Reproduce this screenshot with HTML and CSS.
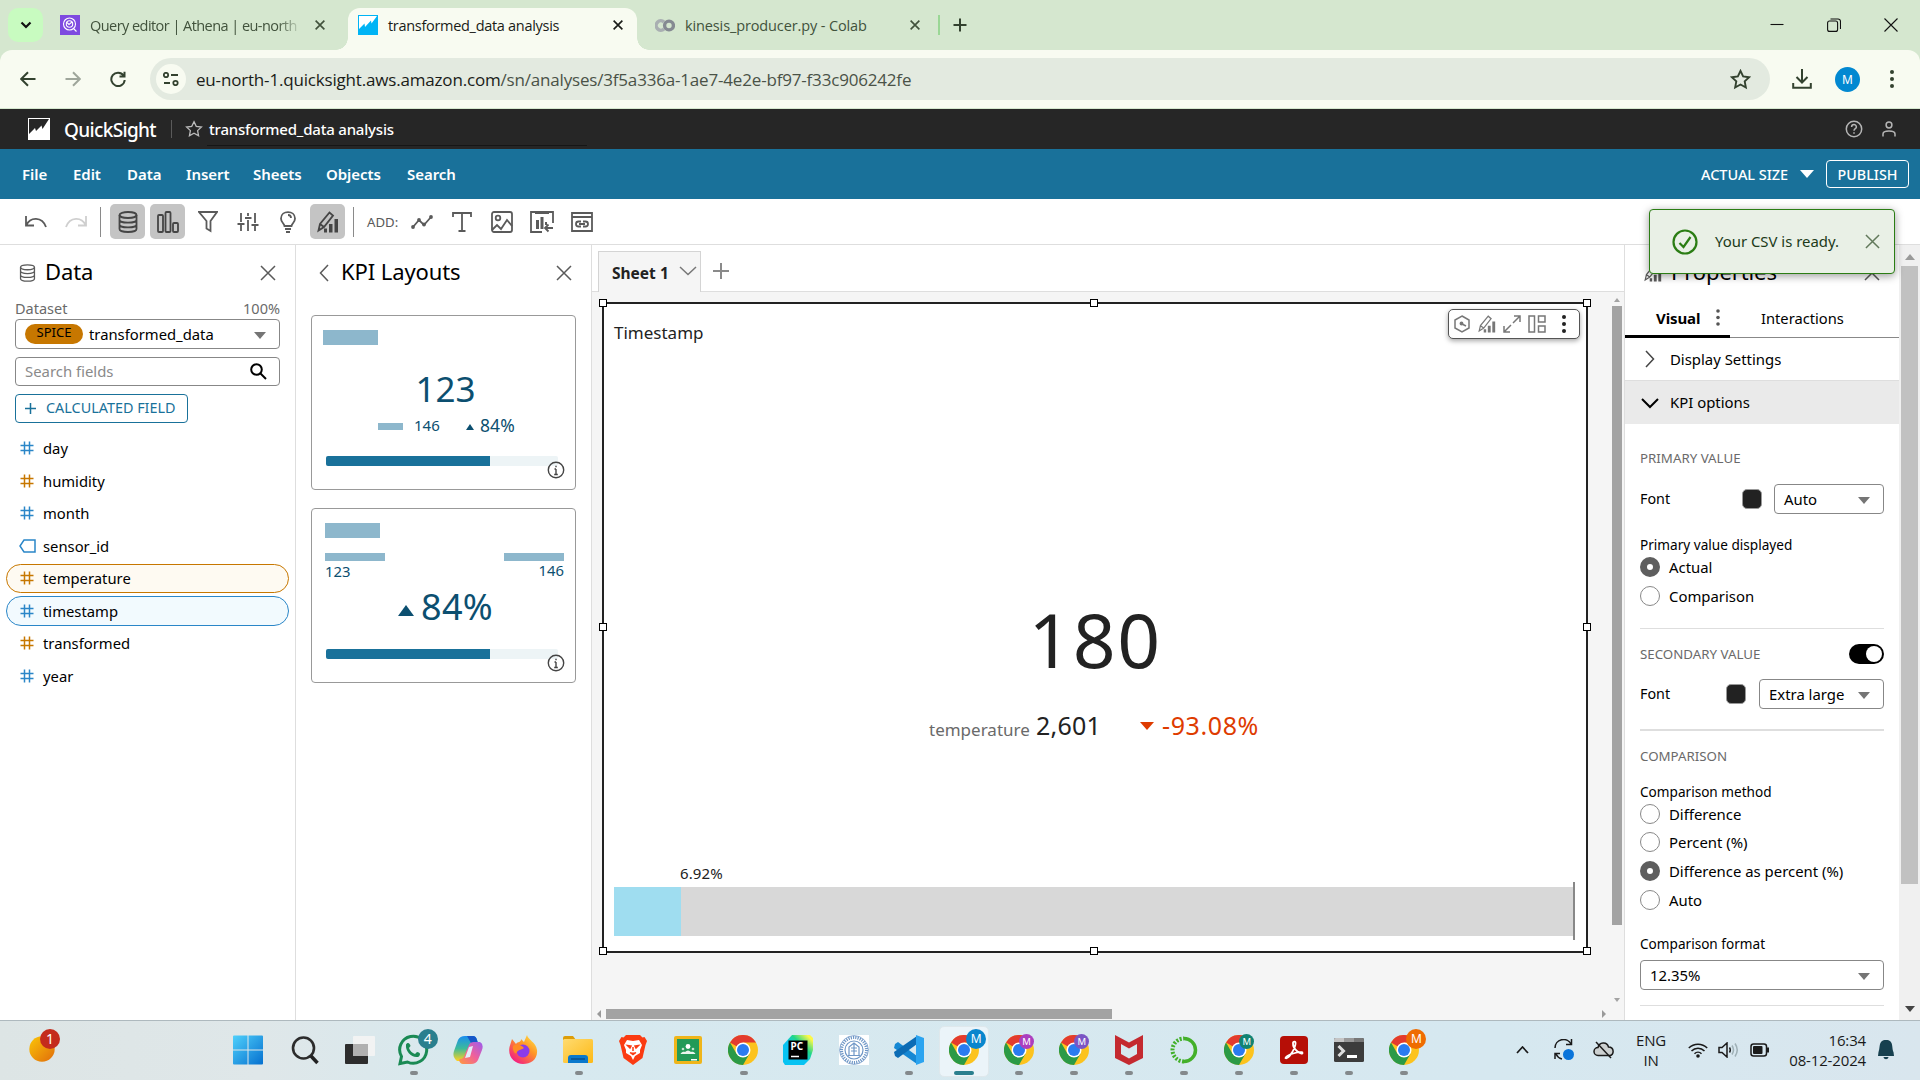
FILE: index.html
```html
<!DOCTYPE html>
<html lang="en">
<head>
<meta charset="utf-8">
<title>transformed_data analysis</title>
<link rel="stylesheet" href="styles.css">
</head>
<body>
<svg class="defs" width="0" height="0">
  <defs>
    <linearGradient id="g-win" x1="0" y1="0" x2="1" y2="1"><stop offset="0" stop-color="#4fd0fb"/><stop offset="1" stop-color="#0670cf"/></linearGradient>
    <linearGradient id="g-sun" x1="0" y1="0" x2="1" y2="1"><stop offset="0" stop-color="#fbc608"/><stop offset="1" stop-color="#e06c0b"/></linearGradient>
    <linearGradient id="g-fold" x1="0" y1="0" x2="1" y2="1"><stop offset="0" stop-color="#ffdb70"/><stop offset="1" stop-color="#fdb916"/></linearGradient>
    <linearGradient id="g-fox" x1="1" y1="0" x2="0.2" y2="1"><stop offset="0" stop-color="#fff04a"/><stop offset=".45" stop-color="#ff9426"/><stop offset="1" stop-color="#f3148b"/></linearGradient>
    <linearGradient id="g-cop1" x1="0" y1="0" x2="0" y2="1"><stop offset="0" stop-color="#1a8ef0"/><stop offset=".5" stop-color="#3dbb9a"/><stop offset="1" stop-color="#ffd21f"/></linearGradient>
    <linearGradient id="g-cop2" x1="1" y1="0" x2="0" y2="1"><stop offset="0" stop-color="#9a5cf0"/><stop offset=".5" stop-color="#f0609a"/><stop offset="1" stop-color="#ff9a3d"/></linearGradient>
    <linearGradient id="g-pc" x1="1" y1="0" x2="0" y2="1"><stop offset=".1" stop-color="#fcf84a"/><stop offset=".35" stop-color="#21d789"/><stop offset=".55" stop-color="#07c3f2"/></linearGradient>
  </defs>
  <symbol id="x" viewBox="0 0 16 16"><path d="M1 1l14 14M15 1L1 15"/></symbol>
  <symbol id="db" viewBox="0 0 20 22"><ellipse cx="10" cy="4" rx="8.500" ry="3"/><path d="M1.500 4v14c0 1.700 3.800 3 8.500 3s8.500-1.300 8.500-3V4M1.500 8.700c0 1.700 3.800 3 8.500 3s8.500-1.300 8.500-3M1.500 13.400c0 1.700 3.800 3 8.500 3s8.500-1.300 8.500-3"/></symbol>
  <symbol id="penbars" viewBox="0 0 22 22"><path d="M1.500 19.500L3 13 12.500 1.500l3.500 3L7 16z M3 13l4 3" fill="none"/><path d="M7 17.500h3v4H7zM12 13h3.500v8.500H12zM17.500 8H21v13.500h-3.500z" fill="currentColor" stroke="none"/></symbol>
  <symbol id="hash" viewBox="0 0 14 14"><path d="M4.500 .5v13M9.500 .5v13M.5 4.500h13M.5 9.500h13"/></symbol>
  <symbol id="info" viewBox="0 0 18 18"><circle cx="9" cy="9" r="7.700"/><path d="M9 8v5.500M7.500 8H9M7.200 13.500h3.600M9 4.700v1.600"/></symbol>
  <symbol id="star" viewBox="0 0 20 20"><path d="M10 1.800l2.500 5.300 5.800.7-4.300 4 1.100 5.800L10 14.800l-5.100 2.800L6 11.800l-4.300-4 5.800-.7z"/></symbol>
  <symbol id="chrome" viewBox="0 0 30 30"><circle cx="15" cy="15" r="15" fill="#fcc31e"/><path d="M15 15L2 7.500A15 15 0 0 1 28 7.500H15z" fill="#e33b2e"/><path d="M2 7.500A15 15 0 0 0 15 30l6.500-11.300L15 15 8.500 18.700z" fill="#2b9a46"/><circle cx="15" cy="15" r="7.500" fill="#fff"/><circle cx="15" cy="15" r="6" fill="#2a7bef"/></symbol>
</svg>

<header class="tabstrip">
  <button class="tab-search"><svg width="12" height="8" viewBox="0 0 12 8"><path d="M1.500 1.500L6 6l4.500-4.500"/></svg></button>
  <div class="tab tab-a">
    <svg width="20" height="20" viewBox="0 0 20 20"><rect width="20" height="20" fill="#7e4ae0"/><g fill="none" stroke="#fff" stroke-width="1.100"><circle cx="9.500" cy="9" r="6"/><circle cx="9.500" cy="9" r="3.200"/><path d="M7 7.500l2 2 3-2.500M13.500 13.500l3 3"/></g></svg>
    <span class="tab-title fade">Query editor | Athena | eu-north</span>
    <svg class="tab-x" width="10" height="10"><use href="#x"/></svg>
  </div>
  <div class="tab tab-b">
    <svg width="20" height="20" viewBox="0 0 20 20"><rect width="20" height="20" fill="#00b4f5"/><path d="M1 1h18l-5.500 7.500-.5-3-6 6.500-.5-3.500L1 14z" fill="#fff"/></svg>
    <span class="tab-title">transformed_data analysis</span>
    <svg class="tab-x" width="10" height="10"><use href="#x"/></svg>
  </div>
  <div class="tab tab-c">
    <svg width="20" height="13" viewBox="0 0 20 13"><g fill="none" stroke-width="3.400"><path d="M9 10a4.700 4.700 0 1 1 0-7" stroke="#a9afb2"/><circle cx="14" cy="6.500" r="4.400" stroke="#858a92"/></g></svg>
    <span class="tab-title">kinesis_producer.py - Colab</span>
    <svg class="tab-x" width="10" height="10"><use href="#x"/></svg>
  </div>
  <i class="tab-sep"></i>
  <svg class="tab-plus" width="14" height="14" viewBox="0 0 14 14"><path d="M7 .5v13M.5 7h13"/></svg>
  <div class="winbtns">
    <svg width="14" height="14" viewBox="0 0 14 14"><path d="M.5 6.500h13"/></svg>
    <svg width="14" height="14" viewBox="0 0 14 14"><rect x=".6" y="3" width="10" height="10.400" rx="2"/><path d="M3.500 1h7.500a2.500 2.500 0 0 1 2.500 2.500V11"/></svg>
    <svg width="14" height="14" viewBox="0 0 14 14"><path d="M.5 .5l13 13M13.500 .5l-13 13"/></svg>
  </div>
</header>

<div class="navwrap"><div class="navbar">
  <svg class="nav-back" width="16" height="16" viewBox="0 0 16 16"><path d="M15.500 8H1.500M8 1.200L1.200 8 8 14.800"/></svg>
  <svg class="nav-fwd" width="16" height="16" viewBox="0 0 16 16"><path d="M.5 8h14M8 1.200L14.800 8 8 14.800"/></svg>
  <svg class="nav-reload" width="16" height="16" viewBox="0 0 16 16"><path d="M13.500 4.500A6.700 6.700 0 1 0 14.700 9M14.500 .7V5.500H9.500"/></svg>
  <div class="urlbar">
    <span class="site"><svg width="16" height="14" viewBox="0 0 16 14"><circle cx="3" cy="3" r="2.200"/><path d="M8 3h7M1 11h6"/><circle cx="12.500" cy="11" r="2.200"/></svg></span>
    <span class="url"><b>eu-north-1.quicksight.aws.amazon.com</b>/sn/analyses/3f5a336a-1ae7-4e2e-bf97-f33c906242fe</span>
    <svg class="bookmark" width="21" height="21"><use href="#star"/></svg>
  </div>
  <svg class="dl" width="20" height="20" viewBox="0 0 20 20"><path d="M10 0v13M4.500 8L10 13.500 15.500 8M1.200 14v4.700h17.600V14"/></svg>
  <span class="avatar">M</span>
  <svg class="kebab" width="4" height="18" viewBox="0 0 4 18"><circle cx="2" cy="2" r="2"/><circle cx="2" cy="9" r="2"/><circle cx="2" cy="16" r="2"/></svg>
</div></div>

<div class="apphead">
  <svg class="qslogo" width="22" height="22" viewBox="0 0 22 22"><rect width="22" height="22" fill="#fff"/><path d="M1 1h20l-6.500 10-1-3.500-5.500 5.500-1-3L1 16z" fill="#262626"/></svg>
  <span class="brand">QuickSight</span>
  <i class="head-sep"></i>
  <svg class="head-star" width="18" height="18"><use href="#star"/></svg>
  <span class="doc-title">transformed_data analysis</span>
  <div class="head-right">
    <svg width="18" height="18" viewBox="0 0 18 18"><circle cx="9" cy="9" r="7.700"/><path d="M6.600 7c0-3.200 4.800-3.200 4.800 0C11.400 8.700 9 8.700 9 10.700M9 12.200v1.500"/></svg>
    <svg width="14" height="16" viewBox="0 0 14 16"><circle cx="7" cy="4" r="2.900"/><path d="M1 15.500V13c0-4 12-4 12 0v2.500"/></svg>
  </div>
</div>

<nav class="menubar">
  <span class="m1">File</span><span class="m2">Edit</span><span class="m3">Data</span><span class="m4">Insert</span><span class="m5">Sheets</span><span class="m6">Objects</span><span class="m7">Search</span>
  <span class="zoom">ACTUAL SIZE</span><i class="caret caret-w"></i>
  <button class="publish">PUBLISH</button>
</nav>

<div class="toolbar">
  <svg class="undo" width="22" height="14" viewBox="0 0 22 14"><path d="M1 1v9.500h8M1.500 10C5 2 17 1 21 12"/></svg>
  <svg class="redo" width="22" height="14" viewBox="0 0 22 14"><path d="M21 1v9.500h-8M20.500 10C17 2 5 1 1 12"/></svg>
  <i class="tsep"></i>
  <span class="tbtn on"><svg width="20" height="22"><use href="#db"/></svg></span>
  <span class="tbtn on"><svg width="22" height="22" viewBox="0 0 22 22"><rect x="1" y="4" width="5" height="17" rx="1"/><rect x="8.500" y="1" width="5" height="20" rx="1"/><rect x="16" y="12" width="5" height="9" rx="1"/></svg></span>
  <span class="tbtn"><svg width="20" height="22" viewBox="0 0 20 22"><path d="M1 1h18l-6.500 9v10l-4-2.500V10z"/></svg></span>
  <span class="tbtn"><svg width="22" height="20" viewBox="0 0 22 20"><path d="M4 1v9M0.500 12h7M4 12v7M11 1v3M8 6h6.500M11 8v11M18 1v10M14.500 13h7M18 13v6"/></svg></span>
  <span class="tbtn"><svg width="16" height="22" viewBox="0 0 16 22"><path d="M4.500 15C4 12 1 11.500 1 7.500 1 -1 15 -1 15 7.500c0 4-3 4.500-3.500 7.500zM5 18h6M6 21h4M8 4c2 0 3 1 3 3"/></svg></span>
  <span class="tbtn on"><svg width="22" height="22"><use href="#penbars"/></svg></span>
  <i class="tsep tsep2"></i>
  <span class="addlbl">ADD:</span>
  <span class="abtn"><svg width="22" height="14" viewBox="0 0 22 14"><path d="M2 12l6-7 5 5 7-8"/><g fill="currentColor" stroke="none"><circle cx="2" cy="12" r="1.900"/><circle cx="8" cy="5" r="1.900"/><circle cx="13" cy="9.500" r="1.900"/><circle cx="20" cy="2" r="1.900"/></g></svg></span>
  <span class="abtn"><svg width="20" height="20" viewBox="0 0 20 20"><path d="M1 5V1h18v4M10 1v18M6.500 19h7"/></svg></span>
  <span class="abtn"><svg width="22" height="22" viewBox="0 0 22 22"><rect x="1" y="1" width="20" height="20" rx="2"/><circle cx="7" cy="7" r="2.300"/><path d="M1 19l5-5 4 4 6-9 5 6"/></svg></span>
  <span class="abtn"><svg width="24" height="22" viewBox="0 0 24 22"><path d="M12 21H1V1h22v11M5 2h14"/><path d="M6 9h3v9H6zM10.500 6h3v12h-3zM15 11h2v3h-2z" fill="currentColor" stroke="none"/><path d="M23 17h-7M18.500 13.500L15 17l3.500 3.500"/></svg></span>
  <span class="abtn"><svg width="22" height="20" viewBox="0 0 22 20"><path d="M1 1h20v18H1zM1 5h20M10 9.500H7.500a2.500 2.500 0 0 0 0 5H10M12 9.500h2.500a2.500 2.500 0 0 1 0 5H12M8 12h6"/></svg></span>
</div>

<main class="work">
  <section class="datapanel">
    <div class="phead"><svg class="phead-db" width="17" height="18"><use href="#db"/></svg><h2 class="h-data">Data</h2><svg class="px" width="16" height="16"><use href="#x"/></svg></div>
    <div class="dsrow"><span>Dataset</span><span>100%</span></div>
    <div class="field select ds"><span class="spice">SPICE</span><span class="dsname">transformed_data</span><i class="caret"></i></div>
    <div class="field search"><span>Search fields</span><svg width="17" height="17" viewBox="0 0 17 17"><circle cx="6.500" cy="6.500" r="5.300"/><path d="M10.500 10.500L16 16"/></svg></div>
    <button class="calc"><svg width="11" height="11" viewBox="0 0 11 11"><path d="M5.500 0v11M0 5.500h11"/></svg>CALCULATED FIELD</button>
    <ul class="fields">
      <li><svg class="blue"><use href="#hash"/></svg>day</li>
      <li><svg class="orange"><use href="#hash"/></svg>humidity</li>
      <li><svg class="blue"><use href="#hash"/></svg>month</li>
      <li><svg class="blue tag" viewBox="0 0 17 14"><path d="M5 1h11v12H5L1 7z"/></svg>sensor_id</li>
      <li class="sel-o"><svg class="orange"><use href="#hash"/></svg>temperature</li>
      <li class="sel-b"><svg class="blue"><use href="#hash"/></svg>timestamp</li>
      <li><svg class="orange"><use href="#hash"/></svg>transformed</li>
      <li><svg class="blue"><use href="#hash"/></svg>year</li>
    </ul>
  </section>

  <section class="kpipanel">
    <div class="phead"><svg class="backchev" width="10" height="18" viewBox="0 0 10 18"><path d="M9 1L1.500 9 9 17"/></svg><h2 class="h-kpi">KPI Layouts</h2><svg class="px" width="16" height="16"><use href="#x"/></svg></div>
    <div class="card">
      <i class="blk c1-title"></i>
      <div class="c1-num">123</div>
      <div class="c1-sub"><i class="blk"></i><span class="s146">146</span><i class="up"></i><span class="s84">84%</span></div>
      <div class="pbar"><i></i></div>
      <svg class="infoi" width="18" height="18"><use href="#info"/></svg>
    </div>
    <div class="card card2">
      <i class="blk c2-title"></i>
      <div class="c2-row"><div><i class="blk"></i><span>123</span></div><div class="r"><i class="blk"></i><span>146</span></div></div>
      <div class="c2-num"><i class="up big"></i><span>84%</span></div>
      <div class="pbar"><i></i></div>
      <svg class="infoi" width="18" height="18"><use href="#info"/></svg>
    </div>
  </section>

  <section class="sheet">
    <div class="sheetbar">
      <div class="sheettab"><b>Sheet 1</b><svg width="18" height="10" viewBox="0 0 18 10"><path d="M1 1l8 7.500L17 1"/></svg></div>
      <svg class="addsheet" width="16" height="16" viewBox="0 0 16 16"><path d="M8 0v16M0 8h16"/></svg>
    </div>
    <div class="canvas">
      <div class="stage">
        <div class="visual">
          <div class="vtitle">Timestamp</div>
          <div class="kpi">180</div>
          <div class="kpisub"><span class="k-l">temperature</span><span class="k-v">2,601</span><i class="down"></i><span class="k-d">-93.08%</span></div>
          <div class="barlabel">6.92%</div>
          <div class="barwrap"><div class="bar"><i style="width:6.98%"></i></div></div>
          <div class="vtools">
            <svg width="18" height="18" viewBox="0 0 18 18"><path d="M9 1l7 4v8l-7 4-7-4V5zM9 9l4 2"/><circle cx="8.500" cy="8.500" r="1.200" fill="currentColor"/></svg>
            <svg width="18" height="18"><use href="#penbars"/></svg>
            <svg width="18" height="18" viewBox="0 0 18 18"><path d="M10 8l7-7M11 1h6v6M8 10l-7 7M1 11v6h6"/></svg>
            <svg width="18" height="18" viewBox="0 0 18 18"><path d="M1 1h5.500v16H1zM10.500 1H17v6h-6.500zM10.500 11H17v6h-6.500z"/></svg>
            <svg class="dots" width="4" height="18" viewBox="0 0 4 18"><circle cx="2" cy="2" r="2"/><circle cx="2" cy="9" r="2"/><circle cx="2" cy="16" r="2"/></svg>
          </div>
          <i class="h tl"></i><i class="h tc"></i><i class="h tr"></i><i class="h ml"></i><i class="h mr"></i><i class="h bl"></i><i class="h bc"></i><i class="h br"></i>
        </div>
        <div class="vscroll"><i class="a up"></i><i class="thumb"></i><i class="a dn"></i></div>
      </div>
      <div class="hscroll"><i class="a lt"></i><i class="thumb"></i><i class="a rt"></i></div>
    </div>
  </section>

  <section class="props">
    <div class="phead"><svg class="pp-ic" width="18" height="18"><use href="#penbars"/></svg><h2 class="h-prop">Properties</h2><svg class="px" width="16" height="16"><use href="#x"/></svg></div>
    <div class="ptabs"><div class="pt on"><b>Visual</b><svg width="4" height="17" viewBox="0 0 4 17"><circle cx="2" cy="2" r="1.800"/><circle cx="2" cy="8.500" r="1.800"/><circle cx="2" cy="15" r="1.800"/></svg></div><div class="pt2">Interactions</div></div>
    <div class="acc"><svg width="18" height="18" viewBox="0 0 18 18"><path d="M5 1l7.500 8L5 17"/></svg>Display Settings</div>
    <div class="acc open"><svg width="18" height="18" viewBox="0 0 18 18"><path d="M1 5l8 8 8-8"/></svg><span>KPI options</span></div>
    <div class="pbody">
      <div class="sec s1">PRIMARY VALUE</div>
      <div class="frow"><span>Font</span><i class="sw"></i><div class="select w1">Auto<i class="caret"></i></div></div>
      <div class="lab l1">Primary value displayed</div>
      <div class="radios r1">
        <div class="radio on"><i></i>Actual</div>
        <div class="radio"><i></i>Comparison</div>
      </div>
      <div class="secrow"><span class="sec">SECONDARY VALUE</span><span class="toggle"><i></i></span></div>
      <div class="frow f2"><span>Font</span><i class="sw"></i><div class="select w2">Extra large<i class="caret"></i></div></div>
      <div class="sec s3">COMPARISON</div>
      <div class="lab l2">Comparison method</div>
      <div class="radios r2">
        <div class="radio"><i></i>Difference</div>
        <div class="radio"><i></i>Percent (%)</div>
        <div class="radio on"><i></i>Difference as percent (%)</div>
        <div class="radio"><i></i>Auto</div>
      </div>
      <div class="lab l3">Comparison format</div>
      <div class="select w3">12.35%<i class="caret"></i></div>
      <div class="endline"></div>
    </div>
  </section>
  <div class="pscroll"><i class="a up"></i><i class="thumb"></i><i class="a dn"></i></div>
</main>

<div class="toast"><svg width="26" height="26" viewBox="0 0 26 26"><circle cx="13" cy="13" r="11.500"/><path d="M7.500 14l4 4 7-10"/></svg><span>Your CSV is ready.</span><svg class="tx" width="15" height="15"><use href="#x"/></svg></div>

<footer class="taskbar">
  <div class="widget"><svg width="26" height="26" viewBox="0 0 26 26"><circle cx="13" cy="13" r="12.700" fill="url(#g-sun)"/></svg><span class="badge">1</span></div>
  <div class="apps">
    <div class="app"><svg width="30" height="30" viewBox="0 0 30 30"><path d="M0 1.500Q0 .5 1 .5h13.500v14H0zM15.500 .5H29q1 0 1 1v13H15.500zM0 15.500h14.500v14H1q-1 0-1-1zM15.500 15.500H30v13q0 1-1 1H15.500z" fill="url(#g-win)"/></svg></div>
    <div class="app nudge"><svg width="30" height="30" viewBox="0 0 30 30"><circle cx="13.500" cy="13" r="10.500" fill="none" stroke="#2c2c2c" stroke-width="2.600"/><path d="M21 21l6.500 7" stroke="#222" stroke-width="3.500"/></svg></div>
    <div class="app nudge"><svg width="30" height="30" viewBox="0 0 30 30"><rect x="0" y="9" width="23" height="20" rx="1" fill="#2d2d2d"/><rect x="8" y="1" width="22" height="20" rx="1" fill="#f4f4f4" opacity=".9"/><rect x="8" y="9" width="15" height="12" fill="#b0b0b0"/></svg></div>
    <div class="app run"><svg width="32" height="32" viewBox="0 0 32 32"><path d="M3 29.500l1.500-7A13.500 13.500 0 1 1 10.500 28z" fill="none" stroke="#1a8a54" stroke-width="3"/><path d="M9 10.500c2-3 4-1 4.500 1.500L12 14c1 3 3 5 6 6l2-2c3 .5 4 2 2 4.500C16 25 8 18 9 10.500z" fill="#1a8a54"/></svg><span class="badge teal">4</span></div>
    <div class="app"><svg width="30" height="30" viewBox="0 0 30 30"><path d="M12 1h8q3 0 4 4l1 3h-7l-4 14q-2 4-6 4H4Q-1 22 1 16L5 5q2-4 7-4z" fill="url(#g-cop1)"/><path d="M14 1h6q3 0 4 4l1 3h-7z" fill="#1557c8"/><path d="M18 29h-8q-3 0-4-4l1-1q4 0 5-5l4-9q1-3 5-3h6q4 2 2 8l-4 10q-2 4-7 4z" fill="url(#g-cop2)"/><path d="M16 12l-4 11 5-1 3-11z" fill="#e3effa"/></svg></div>
    <div class="app"><svg width="30" height="30" viewBox="0 0 30 30"><path d="M19 0c1 5 9 7 10 15 1 9-6 14-14 14S-.5 22 1.500 12L4 4l4 5c2-3 5-1 5-5l3 3z" fill="url(#g-fox)"/><circle cx="15" cy="16" r="6.500" fill="#8a3bea"/><path d="M5 11c4-3 8-1 11 2-2 2-5 1-7 4-1 4-5-1-4-6z" fill="#ff8b25"/></svg></div>
    <div class="app run"><svg width="30" height="30" viewBox="0 0 30 30"><path d="M0 3q0-2 2-2h8l3 4H0z" fill="#dd9d08"/><rect y="4" width="30" height="24" rx="1.500" fill="url(#g-fold)"/><path d="M5 28v-5q0-3 3-3h14q3 0 3 3v5z" fill="#0a78cc"/><path d="M8 24h14" stroke="#0a4f8c" stroke-width="1.500"/></svg></div>
    <div class="app"><svg width="28" height="30" viewBox="0 0 28 30"><path d="M7 0h14l2.500 2.500 2-.5L28 6l-1.500 4-3 13L14 30 4.500 23 1.500 10 0 6l2.500-4 2 .5z" fill="#fb3b12"/><path d="M8 5l6 1 6-1 3 5-2 5 0 3-5 3-2 4-2-4-5-3 0-3-2-5z" fill="#fff"/><path d="M8.500 10.500l3.500.5-1 2zM19.500 10.500l-3.500.5 1 2zM14 12v4M11 17.500l3 2 3-2" fill="#fb3b12" stroke="#fb3b12"/></svg></div>
    <div class="app"><svg width="28" height="30" viewBox="0 -2 28 30"><rect y="-1" width="28" height="28" rx="2" fill="#efb51a"/><rect x="3" y="2" width="22" height="22" fill="#229a57"/><circle cx="14" cy="9.500" r="2.400" fill="#fff"/><circle cx="9" cy="12" r="1.300" fill="#bfe3cd"/><circle cx="19" cy="12" r="1.300" fill="#bfe3cd"/><path d="M6.500 17c1-2.500 4-2.500 4.500-2 2-2 4-2 6 0 .5-.5 3.500-.5 4.500 2z" fill="#e8f5ec"/><path d="M17 22h6v1.500h-6z" fill="#fff"/></svg></div>
    <div class="app run"><svg width="30" height="30"><use href="#chrome"/></svg></div>
    <div class="app"><svg width="30" height="30" viewBox="0 0 30 30"><path d="M9 0h18l3 3v12l-3 9-6 6H2l-2-3V10z" fill="url(#g-pc)"/><rect x="5.500" y="5.500" width="19" height="19" fill="#000"/><path d="M8 21.500h8" stroke="#fff" stroke-width="1.500"/><text x="7.500" y="15" fill="#fff" font-family="Noto Sans,sans-serif" font-size="10" font-weight="700" letter-spacing="0">PC</text></svg></div>
    <div class="app"><svg width="30" height="30" viewBox="0 0 30 30"><rect width="30" height="30" fill="#fff"/><g fill="none" stroke="#6f97c6"><circle cx="15" cy="15" r="12.500" stroke-width="3" stroke-dasharray="1.200 1.100"/><circle cx="15" cy="15" r="14.400" stroke-width=".8"/><circle cx="15" cy="15" r="9" stroke-width="1.200"/><path d="M10 20V12l5-4 5 4v8M12 13h6M12 16h6M15 9v11M9 20.500h12" stroke-width="1.200"/></g></svg></div>
    <div class="app run"><svg width="30" height="30" viewBox="0 0 30 30"><path d="M1 9l3-2 19 14v8L0 13z" fill="#1588d4"/><path d="M1 21l3 2L23 9V1L0 17z" fill="#0b6cb5"/><path d="M22 0l8 3v24l-8 3z" fill="#2ba4f0"/></svg></div>
    <div class="app active"><svg width="30" height="30"><use href="#chrome"/></svg><span class="badge b-blue">M</span></div>
    <div class="app run"><svg width="30" height="30"><use href="#chrome"/></svg><span class="mini m-mag">M</span></div>
    <div class="app run"><svg width="30" height="30"><use href="#chrome"/></svg><span class="mini m-pur">M</span></div>
    <div class="app run"><svg width="28" height="30" viewBox="0 0 28 30"><path d="M0 0l14 7.500L28 0v23l-14 7-14-7zM6 9v10l8 4.500 8-4.500V9l-8 4.500z" fill="#c42a30" fill-rule="evenodd"/></svg></div>
    <div class="app run"><svg width="28" height="28" viewBox="0 0 28 28"><path d="M14 2.500a11.500 11.500 0 0 1 0 23" fill="none" stroke="#43b02a" stroke-width="3.500"/><path d="M14 25.500a11.500 11.500 0 0 1 0-23" fill="none" stroke="#43b02a" stroke-width="4" stroke-dasharray="2 1.500"/></svg></div>
    <div class="app run"><svg width="30" height="30"><use href="#chrome"/></svg><span class="mini m-teal">M</span></div>
    <div class="app run"><svg width="28" height="28" viewBox="0 0 28 28"><rect width="28" height="28" rx="4" fill="#b60e06"/><path d="M5.500 22c0-3 17-8 17-5 0 2.500-10-3-9.500-10 0-2 3-2 2.500 1C15 13 8 24 5.500 22z" fill="none" stroke="#fff" stroke-width="1.800"/></svg></div>
    <div class="app run"><svg width="30" height="24" viewBox="0 0 30 24"><rect width="30" height="24" rx="1.500" fill="#3c3c3c"/><path d="M0 1.500Q0 0 1.500 0H10v4H0z" fill="#c5c5c5"/><path d="M10 0h10v4H10z" fill="#999"/><path d="M20 0h8.500Q30 0 30 1.500V4H20z" fill="#777"/><path d="M4.500 8l5 5-5 5" fill="none" stroke="#ddd" stroke-width="3"/><path d="M13 18.500h10" stroke="#fff" stroke-width="3"/></svg></div>
    <div class="app run"><svg width="30" height="30"><use href="#chrome"/></svg><span class="badge b-or">M</span></div>
  </div>
  <div class="tray">
    <svg class="ty1" width="13" height="8" viewBox="0 0 13 8"><path d="M1 7l5.500-6L12 7" stroke-width="1.700"/></svg>
    <svg class="ty2" width="22" height="22" viewBox="0 0 22 22"><path d="M2 9A8.500 8.500 0 0 1 18 5M18.500 0v5.500H13M9 20a9 9 0 0 1-6-5M2 20v-5.500h5"/><circle cx="15.500" cy="15.500" r="5.500" fill="#0a74da" stroke="none"/></svg>
    <svg class="ty3" width="22" height="18" viewBox="0 0 22 18"><path d="M5 14.500a4 4 0 0 1 0-8C6 1 14 0 15.500 6c6 0 6 8.500 1 8.500z" fill="#ccd0d0"/><path d="M3 1l15 16"/></svg>
    <div class="lang"><span>ENG</span><span>IN</span></div>
    <svg class="ty4" width="20" height="16" viewBox="0 0 20 16"><path d="M.8 6a13 13 0 0 1 18.400 0M3.500 9a9 9 0 0 1 13 0M6.500 11.700a5 5 0 0 1 7 0"/><circle cx="10" cy="14" r="1.800" fill="#1a1a1a" stroke="none"/></svg>
    <svg class="ty5" width="21" height="16" viewBox="0 0 21 16"><path d="M1 5.500h3L9 1v14l-5-4.500H1zM11.500 5.500q1.500 2.500 0 5"/><path d="M14 3.500q3 4.500 0 9M17 1.500q4.500 6.500 0 13" stroke="#9fb0b6"/></svg>
    <svg class="ty6" width="20" height="14" viewBox="0 0 20 14"><rect x="1" y="1" width="15.500" height="12" rx="2.500"/><rect x="3" y="3" width="9.500" height="8" rx="1" fill="#1a1a1a" stroke="none"/><path d="M18 4.500v5" stroke-width="2"/></svg>
    <div class="clock"><span>16:34</span><span>08-12-2024</span></div>
    <svg class="ty7" width="16" height="20" viewBox="0 0 16 20"><path d="M8 0c8 0 5.500 8 7.500 12l.5 4H0l.500-4C2.500 8 0 0 8 0zM5.500 17h5c-.5 3-4.500 3-5 0z" fill="#17404f" stroke="none"/></svg>
  </div>
</footer>
</body>
</html>
```
FILE: styles.css
```css
* { box-sizing: border-box; }
body { margin: 0; width: 1920px; height: 1080px; overflow: hidden; position: relative; font-family: "Noto Sans", "Open Sans", sans-serif; font-size: 15px; color: #000; background: #fff; }
svg { display: block; flex: none; fill: none; stroke: currentColor; stroke-width: 1.5; }
i { display: block; flex: none; }
button { margin: 0; padding: 0; border: 0; background: none; font: inherit; }
h2 { margin: -3px 0 0; font-size: 22px; font-weight: 400; line-height: 30px; letter-spacing: -.1px; }
.defs { position: absolute; }

/* browser chrome */
.tabstrip { height: 50px; background: #d5e7cf; display: flex; align-items: center; font-family: "Open Sans", "Noto Sans", sans-serif; font-size: 14.5px; letter-spacing: -.3px; }
.tab-search { width: 35px; height: 34px; margin: 0 5px 0 8px; border-radius: 10px; background: #c8fbc0; display: flex; align-items: center; justify-content: center; color: #111; }
.tab-search svg { stroke-width: 2.2; }
.tab { display: flex; align-items: center; white-space: nowrap; color: #41523c; }
.tab svg:first-child { stroke: none; margin-right: 10px; }
.tab-title { flex: none; }
.tab-x { stroke-width: 2.6; }
.tab-a { width: 300px; padding-left: 12px; }
.tab-a .tab-title { width: 213px; margin-right: 12px; letter-spacing: -.55px; }
.fade { -webkit-mask-image: linear-gradient(90deg, #000 88%, rgba(0,0,0,.15) 98%); mask-image: linear-gradient(90deg, #000 88%, rgba(0,0,0,.15) 98%); }
.tab-b { align-self: flex-end; height: 42px; width: 289px; padding: 0 0 8px 10px; background: #f8fbf1; border-radius: 12px 12px 0 0; color: #1a1c18; position: relative; }
.tab-b::before, .tab-b::after { content: ""; position: absolute; bottom: 0; width: 12px; height: 12px; }
.tab-b::before { left: -12px; background: radial-gradient(circle at 0 0, transparent 11.5px, #f8fbf1 12px); }
.tab-b::after { right: -12px; background: radial-gradient(circle at 100% 0, transparent 11.5px, #f8fbf1 12px); }
.tab-b .tab-title { width: 225px; }
.tab-c { width: 283px; padding-left: 18px; }
.tab-c .tab-title { width: 225px; letter-spacing: -.12px; }
.tab-sep { width: 2px; height: 20px; margin-left: 18px; background: #9ad795; }
.tab-plus { margin-left: 13px; stroke-width: 2; color: #33412f; }
.winbtns { margin-left: auto; margin-right: 22px; display: flex; gap: 43px; color: #111; }
.winbtns svg { stroke-width: 1.1; }
.navwrap { background: #d5e7cf; height: 59px; }
.navbar { height: 58px; background: #f8fbf1; border-radius: 12px 12px 0 0; display: flex; align-items: center; color: #33422f; }
.navbar > svg { stroke-width: 2; }
.nav-back { margin-left: 20px; }
.nav-fwd { margin-left: 29px; color: #9fa69b; }
.nav-reload { margin-left: 29px; }
.urlbar { margin-left: 24px; width: 1620px; height: 42px; border-radius: 21px; background: #e3eae0; display: flex; align-items: center; }
.site { margin-left: 6px; width: 30px; height: 30px; border-radius: 50%; background: #f8fbf1; display: flex; align-items: center; justify-content: center; }
.site svg { stroke-width: 1.8; }
.url { margin-left: 10px; font-family: "Open Sans", "Noto Sans", sans-serif; font-size: 17px; letter-spacing: -.18px; color: #4a5247; white-space: nowrap; }
.url b { font-weight: 400; color: #1a1c18; }
.bookmark { margin-left: auto; margin-right: 19px; stroke-width: 1.8; }
.dl { margin-left: 22px; }
.avatar { margin-left: 23px; width: 25px; height: 25px; border-radius: 50%; background: #0288d1; color: #fff; font-size: 12px; line-height: 25px; text-align: center; }
.kebab { margin-left: 30px; fill: currentColor; stroke: none; }

/* application header */
.apphead { height: 40px; background: #262626; color: #fff; display: flex; align-items: center; }
.qslogo { margin-left: 28px; stroke: none; }
.brand { margin-left: 14px; width: 92px; padding-top: 2px; font-size: 19px; font-weight: 500; letter-spacing: -.65px; }
.head-sep { width: 1px; height: 18px; margin-left: 15px; background: #5a5a5a; }
.head-star { margin-left: 13px; color: #bbb; stroke-width: 1.4; }
.doc-title { margin-left: 4px; width: 380px; height: 33px; padding: 6px 0 0 2px; line-height: 20px; border-bottom: 1px solid #161616; font-size: 15px; font-weight: 500; letter-spacing: -.2px; }
.head-right { margin-left: auto; margin-right: 24px; display: flex; align-items: center; gap: 19px; color: #b5b5b5; }
.menubar { height: 50px; background: #19719a; color: #fff; display: flex; align-items: center; font-size: 15px; font-weight: 600; padding-left: 22px; letter-spacing: -.05px; }
.m1 { width: 51px; } .m2 { width: 54px; } .m3 { width: 59px; } .m4 { width: 67px; } .m5 { width: 73px; } .m6 { width: 81px; } .m7 { width: 80px; }
.zoom { margin-left: auto; width: 99px; white-space: nowrap; font-size: 14.5px; font-weight: 500; }
.caret { border: 6.500px solid transparent; border-top: 7px solid #757575; border-bottom: 0; position: relative; }
.caret-w { border-width: 8px 7px 0; border-top-color: #fff; }
.publish { margin: 0 11px 0 12px; width: 83px; height: 28px; border: 1px solid #fff; border-radius: 4px; color: #fff; font-size: 14.3px; font-weight: 500; line-height: 25px; }

.toolbar { height: 46px; border-bottom: 1px solid #dedede; display: flex; align-items: center; color: #5a5a5a; }
.toolbar svg { stroke-width: 1.8; }
.undo { margin-left: 25px; }
.redo { margin-left: 18px; color: #cfcfcf; }
.tsep { width: 1px; height: 30px; margin: 0 9px 0 13px; background: #8a8a8a; }
.tbtn { flex: none; width: 35px; height: 35px; margin-right: 5px; border-radius: 5px; display: flex; align-items: center; justify-content: center; }
.on.tbtn { background: #c4c4c4; color: #454545; }
.tsep2 { margin: 0 13px 0 3px; }
.addlbl { width: 35px; font-size: 13.2px; }
.abtn { width: 40px; display: flex; justify-content: center; }

/* workspace */
.work { height: 775px; display: flex; }
.phead { height: 55px; display: flex; align-items: center; color: #5a5a5a; }
.phead h2 { color: #000; }
.px { stroke-width: 1.5; margin-left: auto; }
.datapanel { width: 296px; border-right: 1px solid #dedede; }
.datapanel .phead { padding: 0 19px; }
.h-data { margin-left: 9px; }
.phead-db { stroke-width: 1.6; }
.dsrow { display: flex; justify-content: space-between; margin: 0 15px; height: 19px; line-height: 17px; font-size: 14.5px; color: #6a6a6a; }
.field, .select { border: 1px solid #878787; border-radius: 4px; display: flex; align-items: center; white-space: nowrap; }
.field { margin: 0 15px; height: 29px; }
.spice { margin-left: 9px; width: 58px; height: 20px; border-radius: 10px; background: #c77700; font-size: 13px; line-height: 16px; text-align: center; }
.dsname { margin-left: 6px; font-size: 14.8px; line-height: 20px; padding-bottom: 1px; }
.select .caret { margin: 2px 13px 0 auto; }
.search { margin-top: 8px; color: #8a8a8a; font-size: 14.9px; line-height: 20px; padding: 0 12px 1px 9px; justify-content: space-between; }
.search svg { color: #000; stroke-width: 2; }
.calc { margin: 8px 15px 0; width: 173px; height: 29px; border: 1px solid #19719a; border-radius: 4px; color: #19719a; font-size: 14.4px; line-height: 20px; display: flex; align-items: center; padding: 0 0 1px 9px; white-space: nowrap; }
.calc svg { margin-right: 10px; }
.fields { list-style: none; margin: 10.500px 0 0; padding: 0; }
.fields li { height: 29.500px; margin: 0 6px 3px; border: 1px solid transparent; border-radius: 15px; display: flex; align-items: center; padding-left: 13px; font-size: 14.8px; }
.fields svg { width: 14px; height: 14px; margin-right: 9px; }
.fields svg.tag { width: 17px; height: 14px; margin: 0 7px 0 -1px; }
.blue { color: #2a86c8; }
.orange { color: #c77700; }
.fields .sel-o { background: #fefaf2; border-color: #c77700; }
.fields .sel-b { background: #f2fafe; border-color: #2a86c8; }

.kpipanel { width: 296px; border-right: 1px solid #dedede; }
.kpipanel .phead { padding: 0 19px 0 23px; height: 55px; margin-bottom: 15px; }
.h-kpi { margin-left: 12px; }
.card { margin: 0 15px 18px; height: 175px; border: 1px solid #999; border-radius: 4px; position: relative; color: #0c4f70; overflow: hidden; }
.blk { background: #8db7cc; }
.c1-title { width: 55px; height: 15px; margin: 14px 0 0 11px; }
.c1-num { margin: 26px 0 0 4px; height: 48px; line-height: 35px; font-size: 35px; text-align: center; }
.c1-sub { height: 22px; padding-left: 66px; display: flex; align-items: center; margin-top: -5px; line-height: 22px; }
.c1-sub .blk { width: 25px; height: 7px; margin-top: 3px; }
.s146 { margin-left: 11px; width: 52px; font-size: 15px; }
.up { border: 4.500px solid transparent; border-bottom: 6px solid #0c4f70; border-top: 0; }
.c1-sub .up { margin: 4px 6px 0 0; }
.s84 { font-size: 17.5px; letter-spacing: .1px; }
.pbar { position: absolute; left: 14px; top: 140px; width: 232px; height: 10px; border-radius: 2px; background: #edf4f6; overflow: hidden; }
.pbar i { width: 164px; height: 10px; background: #19719a; }
.infoi { position: absolute; right: 10px; bottom: 10px; color: #444; stroke-width: 1.4; }
.c2-title { width: 55px; height: 15px; margin: 14px 0 0 13px; }
.c2-row { margin: 15px 11px 0 13px; display: flex; justify-content: space-between; font-size: 14.8px; line-height: 20px; }
.c2-row .blk { width: 60px; height: 8px; }
.c2-row span { display: block; }
.c2-row .r { text-align: right; }
.c2-row .r span { margin-top: -1px; }
.c2-num { display: flex; align-items: center; height: 40px; margin-top: 5px; padding-left: 86px; font-size: 36px; letter-spacing: .3px; }
.big { border-width: 0 8px 11px; margin: 9px 7px 0 0; }

.sheet { width: 1033px; border-right: 1px solid #dedede; }
.sheetbar { height: 47px; border-bottom: 1px solid #dedede; display: flex; padding: 6px 0 0 6px; }
.sheettab { width: 103px; height: 41px; border: 1px solid #d4d4d4; border-bottom: 0; background: #f5f5f5; display: flex; align-items: center; padding: 2px 3px 0 13px; color: #222; font-size: 15.5px; justify-content: space-between; }
.sheettab svg { color: #777; margin-bottom: 4px; }
.sheettab b { font-weight: 700; }
.addsheet { margin: 12px 0 0 12px; color: #8a8a8a; stroke-width: 2; }
.canvas { height: 728px; background: #f5f5f5; }
.stage { height: 716px; display: flex; justify-content: space-between; padding: 10px 2px 0 10px; }
.visual { position: relative; width: 986px; height: 651px; border: 2px solid #222; background: #fff; }
.vtitle { height: 58px; padding-left: 10px; line-height: 58px; font-size: 17px; color: #222; }
.kpi { margin-top: 228px; height: 100px; line-height: 98px; font-size: 75px; letter-spacing: 1.4px; text-align: center; color: #222; }
.kpisub { display: flex; align-items: baseline; height: 50px; margin-top: 12px; padding-left: 325px; }
.k-l { width: 107px; font-size: 17px; color: #6a6a6a; position: relative; top: 1px; }
.k-v { width: 104px; font-size: 25px; color: #222; line-height: 46px; letter-spacing: .2px; }
.down { border: 7px solid transparent; border-top: 8px solid #de3b00; border-bottom: 0; margin-right: 8px; align-self: flex-start; margin-top: 20px; }
.k-d { font-size: 25px; letter-spacing: .6px; color: #de3b00; }
.barlabel { margin: 109px 0 0 76px; height: 21px; line-height: 24px; font-size: 15px; letter-spacing: .1px; color: #222; }
.barwrap { margin-left: 10px; width: 961px; height: 58px; border-right: 2px solid #888; padding-top: 5px; }
.bar { height: 49px; background: #d8d8d8; }
.bar i { height: 49px; background: #9fddf0; }
.vtools { position: absolute; left: 844px; top: 5px; width: 132px; height: 30px; border: 1px solid #555; border-radius: 5px; background: #fff; box-shadow: 0 2px 5px rgba(0,0,0,.35); display: flex; align-items: center; gap: 7px; padding-left: 4px; color: #777; }
.vtools .dots { margin-left: 9px; fill: #222; stroke: none; }
.h { position: absolute; width: 8px; height: 8px; border: 1px solid #000; background: #fff; }
.tl, .ml, .bl { left: -5px; } .tc, .bc { left: 486px; } .tr, .mr, .br { right: -5px; }
.tl, .tc, .tr { top: -5px; } .ml, .mr { top: 319px; } .bl, .bc, .br { bottom: -4px; }
.vscroll { width: 10px; height: 706px; display: flex; flex-direction: column; align-items: center; }
.vscroll .thumb { width: 10px; height: 619px; background: #a3a3a3; margin: 4px 0 73px; }
.vscroll .a { border: 3.500px solid transparent; }
.vscroll .a.up { border-bottom: 4px solid #a3a3a3; border-top: 0; margin-top: -4px; }
.vscroll .a.dn { border-top: 4px solid #a3a3a3; border-bottom: 0; }
.hscroll { height: 12px; display: flex; align-items: center; padding-left: 5px; }
.hscroll .a { border: 4px solid transparent; }
.hscroll .lt { border-right: 4px solid #999; border-left: 0; }
.hscroll .rt { border-left: 4px solid #999; border-right: 0; }
.hscroll .thumb { width: 506px; height: 10px; background: #a3a3a3; margin: 0 490px 0 5px; }

.props { width: 274px; }
.props .phead { padding: 0 19px 0 19px; }
.h-prop { margin-left: 9px; }
.ptabs { height: 38px; display: flex; border-bottom: 1px solid #888; font-size: 15px; }
.pt { width: 105px; height: 38px; border-bottom: 3px solid #000; padding-left: 31px; display: flex; align-items: center; letter-spacing: -.1px; }
.pt b { width: 60px; }
.pt svg { fill: #555; stroke: none; }
.pt2 { padding: 7px 0 0 31px; line-height: 22px; font-size: 14.700px; }
.acc { height: 43px; border-bottom: 1px solid #dedede; padding-left: 16px; display: flex; align-items: center; font-size: 14.900px; }
.acc svg { margin-right: 11px; color: #444; }
.acc.open { background: #eaeaea; border: 0; }
.acc.open span { padding-bottom: 2px; }
.acc.open svg { color: #000; stroke-width: 2; }
.pbody { margin: 0 15px; font-size: 14.900px; }
.sec { font-size: 13.300px; color: #6a6a6a; line-height: 20px; }
.s1 { padding-top: 24px; }
.frow { display: flex; align-items: center; height: 30px; margin-top: 16px; }
.frow span { font-size: 14.300px; padding-bottom: 2px; }
.sw { width: 20px; height: 20px; border-radius: 5px; background: #222; border: 1px solid #999; margin-left: auto; margin-right: 12px; }
.f2 .sw { margin-right: 13px; }
.f2 { margin-top: 15px; }
.select { height: 30px; padding-left: 9px; line-height: 20px; }
.select.ds { height: 30px; margin-top: 0; padding-left: 0; }
.w1 { width: 110px; } .w2 { width: 125px; }
.lab { line-height: 20px; font-size: 13.600px; }
.l1 { margin-top: 21px; }
.r1 { margin-top: -2px; }
.r2 { margin-top: -3px; }
.radio { height: 28.700px; display: flex; align-items: center; }
.radio i { width: 20px; height: 20px; border-radius: 50%; border: 1px solid #888; margin-right: 9px; }
.radio.on i { border: 7px solid #5e5e5e; }
.secrow { margin-top: 18px; border-top: 1px solid #dedede; height: 36px; display: flex; align-items: flex-end; justify-content: space-between; }
.toggle { width: 35px; height: 20px; border-radius: 10px; background: #000; padding: 2px; }
.toggle i { width: 16px; height: 16px; border-radius: 50%; background: #fff; margin-left: 15px; }
.s3 { margin-top: 20px; border-top: 2px solid #dedede; padding-top: 15px; }
.l2 { margin-top: 16px; }
.l3 { margin-top: 20px; }
.w3 { margin-top: 6px; }
.endline { margin-top: 15px; border-top: 1px solid #dedede; }
.pscroll { width: 21px; background: #f0f0f0; display: flex; flex-direction: column; align-items: center; }
.pscroll .a { border: 5px solid transparent; }
.pscroll .a.up { border-bottom: 6px solid #999; border-top: 0; margin-top: 9px; }
.pscroll .a.dn { border-top: 6px solid #444; border-bottom: 0; }
.pscroll .thumb { width: 17px; height: 618px; background: #c1c1c1; margin: 6px 0 122px; }

.toast { position: absolute; left: 1649px; top: 209px; width: 246px; height: 65px; border: 1px solid #2b7d14; border-radius: 4px; background: #e9f0e6; box-shadow: 0 2px 8px rgba(0,0,0,.4); display: flex; align-items: center; padding-left: 22px; color: #2b7d14; font-size: 14.900px; white-space: nowrap; }
.toast svg { stroke-width: 2.2; }
.toast span { margin-left: 17px; width: 150px; padding-bottom: 1px; color: #203a19; }
.toast .tx { stroke-width: 1.6; color: #62795b; }

/* desktop taskbar */
.taskbar { height: 60px; border-top: 1px solid #aeb9be; background: linear-gradient(90deg, #dde5e5 0, #dfe7e9 260px, #d7e9ef 480px, #d6e8f0 1500px, #d9e6ee 1920px); display: flex; position: relative; }
.widget { width: 220.500px; padding: 15px 0 0 29px; position: relative; }
.widget svg, .app svg { stroke: none; }
.badge { position: absolute; width: 20px; height: 20px; border-radius: 50%; background: #c42b1c; color: #fff; font-size: 14px; line-height: 20px; text-align: center; }
.widget .badge { left: 40px; top: 8px; }
.apps { display: flex; }
.app { width: 55.050px; height: 59px; padding-bottom: 2px; display: flex; align-items: center; justify-content: center; position: relative; }
.nudge { padding-left: 3px; }
.app .badge { left: 32px; top: 8px; }
.app .teal { background: #2a7f8e; }
.app .b-blue { background: #0a86cd; left: 30px; top: 8px; font-size: 12px; }
.app .b-or { background: #ef6c00; left: 30px; top: 8px; font-size: 12px; }
.mini { position: absolute; left: 28px; top: 13px; width: 15px; height: 15px; border-radius: 50%; color: #fff; font-size: 9.500px; line-height: 15px; text-align: center; }
.m-mag { background: #ab3fbf; } .m-pur { background: #7a55c4; } .m-teal { background: #118372; }
.run::after, .active::after { content: ""; position: absolute; bottom: 5px; left: 24px; width: 8px; height: 4px; border-radius: 2px; background: #84898c; }
.active::before { content: ""; position: absolute; left: 3px; top: 5px; width: 48px; height: 49px; border-radius: 5px; background: #ebf4f9; border: 1px solid #dfe8ec; }
.active svg { position: relative; }
.active::after { left: 18px; width: 20px; background: #2a7f8e; }
.tray { margin-left: auto; padding: 0 26px 2px 0; display: flex; align-items: center; color: #1a1a1a; font-family: "Open Sans", sans-serif; font-size: 15px; letter-spacing: -.15px; line-height: 20px; }
.lang, .clock { display: flex; flex-direction: column; }
.lang { width: 40px; align-items: center; margin: 0 17px 0 16px; }
.clock { width: 82px; align-items: flex-end; margin: 0 12px 0 14px; white-space: nowrap; }
.ty1 { margin-right: 24px; } .ty2 { margin-right: 18px; } .ty4 { margin-right: 10px; } .ty5 { margin-right: 11px; }
```
